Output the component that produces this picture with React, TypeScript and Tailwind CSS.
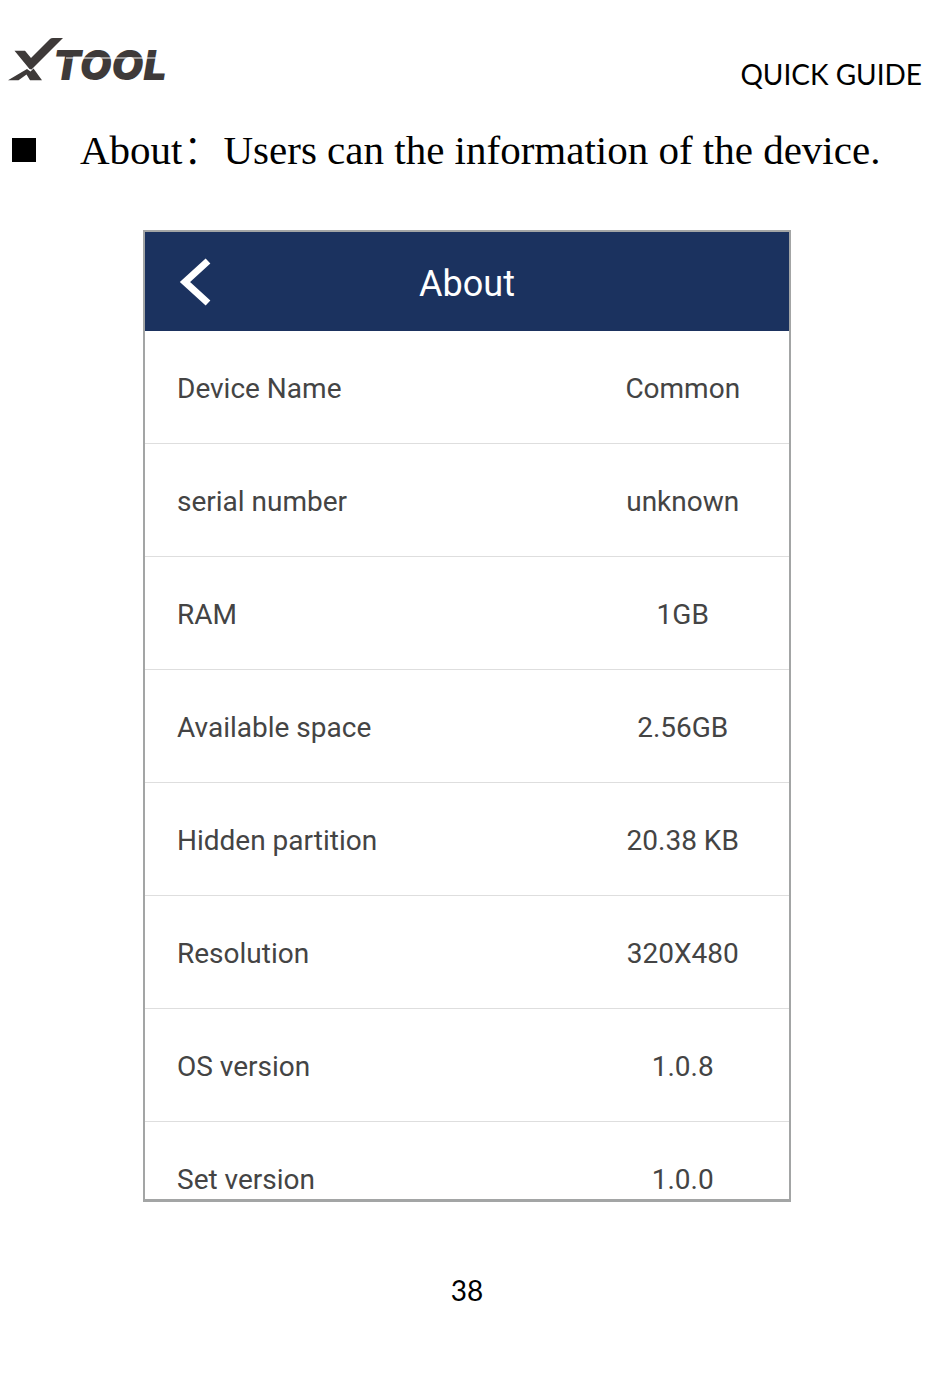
const rows = [
  { label: "Device Name", value: "Common" },
  { label: "serial number", value: "unknown" },
  { label: "RAM", value: "1GB" },
  { label: "Available space", value: "2.56GB" },
  { label: "Hidden partition", value: "20.38 KB" },
  { label: "Resolution", value: "320X480" },
  { label: "OS version", value: "1.0.8" },
  { label: "Set version", value: "1.0.0" },
];

function Logo() {
  return (
    <svg width="172" height="52" viewBox="0 0 172 52" role="img" aria-label="XTOOL" className="shrink-0">
      {/* check mark crossing the lower strokes */}
      <path d="M6.5 12.7 H17 L23 20 L42 1 Q43 0 45 0 H55 L23.5 31.5 L21.5 31 Z" fill="#3e3a39" />
      <path d="M0 42.3 L19 31 L22.5 33.5 L25.5 30.5 L34 42.3 H22 L18.5 36.5 L10.5 42.3 Z" fill="#3e3a39" />
      <text x="45" y="42" fontSize="41" fontWeight="900" fontStyle="italic" fontFamily="Inter, sans-serif" fill="#3e3a39">
        TOOL
      </text>
      <path d="M58 20 H160" stroke="#fff" strokeWidth="1" />
    </svg>
  );
}

function DeviceInfo() {
  return (
    <table className="w-full border-separate border-spacing-0 text-[28px] leading-8 text-[#444]">
      <tbody className="[&>tr:last-child>*]:border-b-0 [&>tr:last-child>*]:pb-[3px]">
        {rows.map((row) => (
          <tr key={row.label}>
            <th scope="row" className="border-b border-[#dedede] pt-[42px] pb-[38px] pl-8 text-left font-normal">
              {row.label}
            </th>
            <td className="w-[33%] border-b border-[#dedede] pt-[42px] pb-[38px] text-center">{row.value}</td>
          </tr>
        ))}
      </tbody>
    </table>
  );
}

export default function App() {
  return (
    <div className="min-h-screen bg-white pt-[38px] pb-16 text-black">
      <header className="flex items-start justify-between pr-7 pl-2">
        <Logo />
        <p className="pt-5 font-['Lato',sans-serif] text-[28px] leading-8">QUICK GUIDE</p>
      </header>

      <main className="pr-7 pl-3">
        <ul className="pt-9">
          <li className="flex items-center">
            <span className="mr-11 size-6 shrink-0 bg-black" />
            <h1 className="font-['Liberation_Serif','Noto_Sans_CJK_SC',serif] text-[41px] leading-12 font-light">
              About：Users can the information of the device.
            </h1>
          </li>
        </ul>

        <section className="mx-auto mt-14 w-full max-w-[648px] border-2 border-b-3 border-[#a3a5a5] font-['Roboto',sans-serif]">
          <div className="grid h-[99px] grid-cols-[1fr_auto_1fr] items-center bg-[#1b325f] text-white">
            <button type="button" aria-label="Back" className="ml-8 justify-self-start">
              <svg width="36" height="48" viewBox="0 0 36 48" fill="none" stroke="currentColor" strokeWidth="7">
                <path d="M31 3 L8 24 L31 45" />
              </svg>
            </button>
            <h2 className="pt-1 text-[36px] leading-10">About</h2>
          </div>
          <DeviceInfo />
        </section>
      </main>

      <footer className="mt-18 pr-7 pl-3 text-center font-['Lato',sans-serif] text-[28px] leading-8">38</footer>
    </div>
  );
}
